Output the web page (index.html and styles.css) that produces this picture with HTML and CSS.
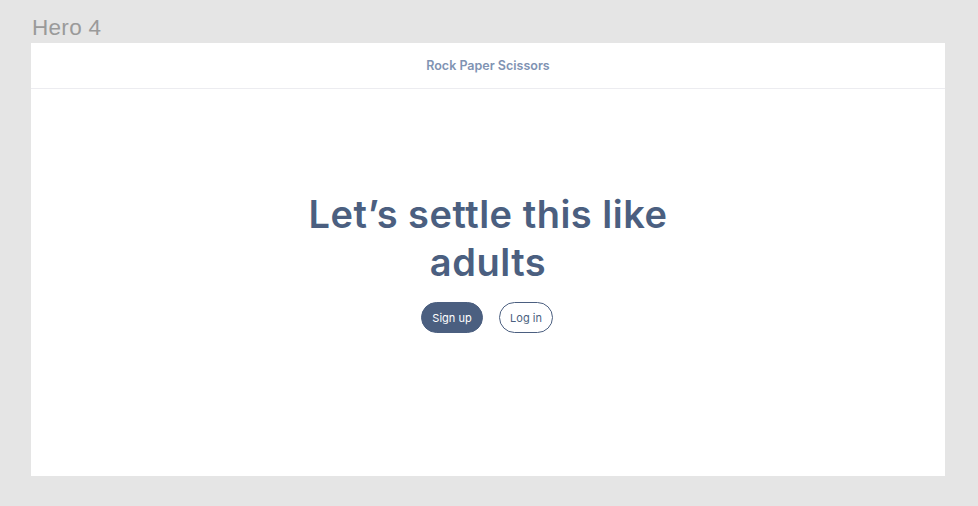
FILE: index.html
```html
<!DOCTYPE html>
<html>
<head>
<meta charset="utf-8">
<link rel="stylesheet" href="styles.css">
</head>
<body>
<div class="canvas">
  <div class="label">Hero 4</div>
  <div class="frame">
    <header class="topbar"><span class="brand">Rock Paper Scissors</span></header>
    <main class="hero">
      <h1 class="title">Let’s settle this like<br>adults</h1>
      <div class="actions">
        <button class="btn btn-primary">Sign up</button>
        <button class="btn btn-outline">Log in</button>
      </div>
    </main>
  </div>
</div>
</body>
</html>
```
FILE: styles.css
```css
html, body { margin: 0; padding: 0; }
body { background: #e5e5e5; width: 978px; height: 506px; overflow: hidden; }
.canvas { padding: 13px 33px 0 31px; }
.label {
  font-family: "Liberation Sans", Arial, sans-serif;
  font-size: 22.5px;
  color: #9a9a9a;
  line-height: 29px;
  height: 30px;
  padding-left: 1px;
  letter-spacing: 0.3px;
}
.frame {
  background: #fff;
  width: 914px;
  height: 433px;
  display: flex;
  flex-direction: column;
  font-family: "Inter", "Noto Sans", sans-serif;
}
.topbar {
  height: 45px;
  border-bottom: 1px solid #ececf0;
  display: flex;
  align-items: center;
  justify-content: center;
}
.brand { font-size: 12.5px; font-weight: 600; color: #7f93b3; }
.hero {
  display: flex;
  flex-direction: column;
  align-items: center;
  padding-top: 101px;
}
.title {
  margin: 0;
  text-align: center;
  font-size: 38px;
  line-height: 48px;
  font-weight: 600;
  color: #4b5f80;
  letter-spacing: 0.5px;
}
.actions { display: flex; gap: 16px; margin-top: 16px; padding-right: 2px; }
.btn {
  font-family: "Inter", "Noto Sans", sans-serif;
  font-size: 11px;
  height: 31px;
  border-radius: 16px;
  border: 1px solid #4b5f80;
  cursor: pointer;
}
.btn-primary { background: #4b5f80; color: #fff; width: 62px; }
.btn-outline { background: #fff; color: #4b5f80; width: 54px; }
```
